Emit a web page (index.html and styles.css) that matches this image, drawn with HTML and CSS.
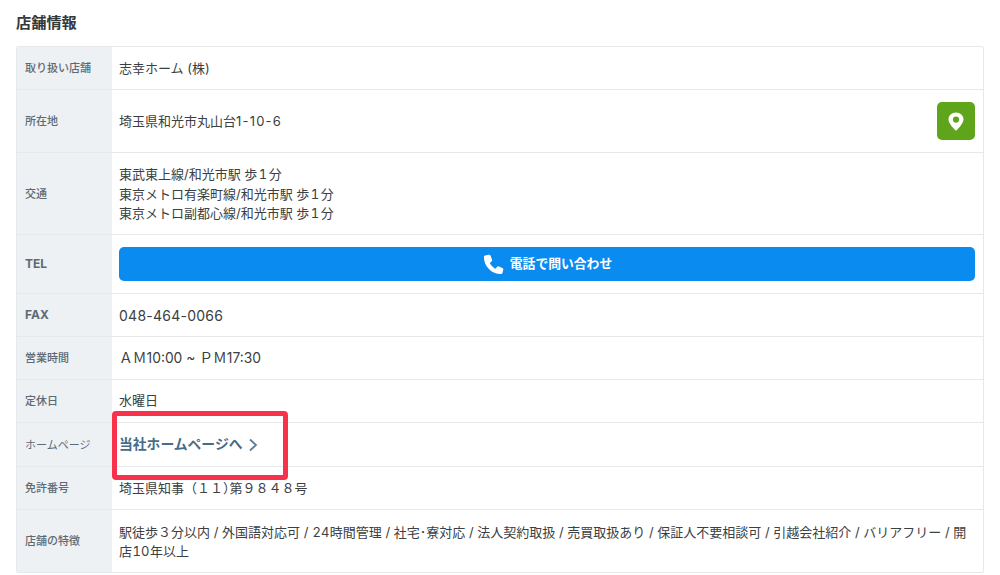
FILE: index.html
```html
<!DOCTYPE html>
<html lang="ja">
<head>
<meta charset="utf-8">
<title>店舗情報</title>
<link rel="stylesheet" href="styles.css">
</head>
<body>
<main class="page">
  <h2 class="title">店舗情報</h2>
  <div class="info">
    <div class="row"><div class="head">取り扱い店舗</div><div class="cell">志幸ホーム (株)</div></div>
    <div class="row row-map"><div class="head">所在地</div><div class="cell cell-flush cell-split"><span class="address">埼玉県和光市丸山台<span class="spaced">1-10-6</span></span>
      <a class="map" href="#" aria-label="地図"><svg viewBox="0 0 16 19" width="16" height="19"><path fill="#fff" fill-rule="evenodd" d="M8 .5C3.800.5.500 3.600.500 7.500c0 3.400 4 7.700 6.800 10.700.4.400 1 .4 1.400 0 2.800-3 6.800-7.300 6.800-10.700C15.500 3.600 12.200.5 8 .5zm0 4a3.100 3.100 0 1 1 0 6.200 3.100 3.100 0 0 1 0-6.200z"/></svg></a></div></div>
    <div class="row row-lines"><div class="head">交通</div><div class="cell"><div>東武東上線/和光市駅 歩<span class="num">1</span>分<br>東京メトロ有楽町線/和光市駅 歩<span class="num">1</span>分<br>東京メトロ副都心線/和光市駅 歩<span class="num">1</span>分</div></div></div>
    <div class="row row-tel"><div class="head head-latin">TEL</div><div class="cell cell-flush"><a class="call" href="#"><svg viewBox="0 0 24 24" width="23" height="23"><path fill="#fff" d="M6.600 1.800 3.300 2.600C2.500 2.800 2 3.400 2 4.200 2 14 10 22 19.800 22c.8 0 1.400-.5 1.600-1.300l.8-3.300c.2-.8-.2-1.500-.9-1.800l-3.800-1.600c-.7-.3-1.400-.1-1.900.5l-1.500 1.900c-2.600-1.300-4.700-3.400-6-6l1.900-1.500c.6-.5.800-1.200.5-1.900L8.900 2.700c-.4-.7-1.500-1.100-2.300-.9z"/></svg><span>電話で問い合わせ</span></a></div></div>
    <div class="row"><div class="head head-latin">FAX</div><div class="cell fax">048-464-0066</div></div>
    <div class="row"><div class="head">営業時間</div><div class="cell hours">ＡＭ10:00 ~ ＰＭ17:30</div></div>
    <div class="row"><div class="head">定休日</div><div class="cell cell-flush">水曜日</div></div>
    <div class="row row-link"><div class="head head-light">ホームページ</div><div class="cell cell-flush"><a class="home" href="#">当社ホームページへ<svg viewBox="0 0 10 14" width="10" height="14"><path fill="none" stroke="#5b7f99" stroke-width="1.800" d="M2 1.500 8 7l-6 5.500"/></svg></a></div></div>
    <div class="row"><div class="head">免許番号</div><div class="cell"><div>埼玉県知事（１１<span class="paren">）</span>第９８４８号</div></div></div>
    <div class="row row-map"><div class="head">店舗の特徴</div><div class="cell"><div>駅徒歩３分以内 / 外国語対応可 / <span class="num-tight">24</span>時間管理 / 社宅･寮対応 / 法人契約取扱 / 売買取扱あり / 保証人不要相談可 / 引越会社紹介 / バリアフリー / 開店<span class="num-tight">10</span>年以上</div></div></div>
  </div>
  <div class="highlight"></div>
</main>
</body>
</html>
```
FILE: styles.css
```css
* { box-sizing: border-box; }
html, body { margin: 0; background: #fff; }
body {
  font-family: "Inter", "Noto Sans CJK JP", sans-serif;
  color: #3b4043;
  overflow: hidden;
}
.page { position: relative; width: 1000px; height: 575px; padding: 13px 16px 0; }
.title { margin: 0 0 14px; font-size: 15.200px; line-height: 19px; font-weight: 700; color: #33383b; }
.info { border: 1px solid #e6e9ec; border-radius: 2px; }
.row { display: flex; height: 43px; border-bottom: 1px solid #e6e9ec; }
.row:last-child { height: 62px; border-bottom: 0; }
.row-map { height: 63px; }
.row-lines { height: 82px; }
.row-tel { height: 59px; }
.row-link { height: 44px; }
.head {
  flex: 0 0 95px;
  display: flex;
  align-items: center;
  padding: 0 8px 2px;
  background: #edf1f4;
  font-size: 11px;
  font-weight: 500;
  color: #5d6a73;
}
.head-latin { font-size: 12px; font-weight: 700; }
.head-light { font-weight: 400; }
.cell {
  flex: 1;
  min-width: 0;
  display: flex;
  flex-direction: column;
  justify-content: center;
  padding: 2px 8px 0 7px;
  font-size: 13px;
  line-height: 19.500px;
}
.cell-flush { padding-top: 0; }
.cell-split { flex-direction: row; justify-content: space-between; align-items: center; }
.address { padding-top: 2px; }
.spaced { letter-spacing: 1.200px; }
.num { font-variant-numeric: tabular-nums; padding: 0 1.500px; }
.num-tight { font-variant-numeric: tabular-nums; padding: 0 .5px; }
.paren { font-feature-settings: "halt"; }
.fax { font-size: 14px; letter-spacing: .25px; }
.hours { font-size: 13.800px; }
.map {
  width: 38px;
  height: 38px;
  display: flex;
  align-items: center;
  justify-content: center;
  background: #5fa51c;
  border-radius: 5px;
}
.call {
  height: 34px;
  display: flex;
  align-items: center;
  justify-content: center;
  gap: 5px;
  background: #0a8bf0;
  border-radius: 5px;
  color: #fff;
  font-size: 12.800px;
  font-weight: 700;
  text-decoration: none;
}
.home {
  display: inline-flex;
  align-items: center;
  gap: 6px;
  font-size: 13.800px;
  font-weight: 700;
  color: #466c87;
  text-decoration: none;
}
.highlight {
  position: absolute;
  left: 112px;
  top: 411px;
  width: 176px;
  height: 69px;
  border: 5px solid #f8324b;
  border-radius: 4px;
}
```
